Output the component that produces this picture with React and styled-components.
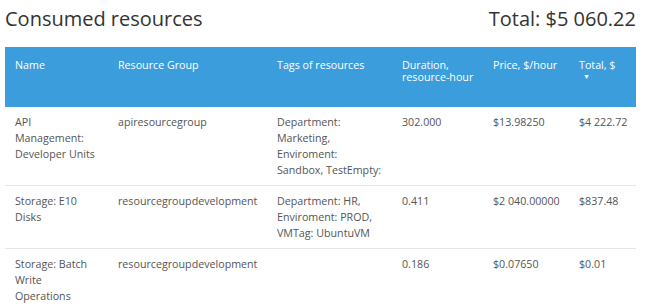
import React from 'react'
import styled, { createGlobalStyle } from 'styled-components'

const Global = createGlobalStyle`
  body {
    margin: 0;
    background: #fff;
    font-family: "Open Sans", "Noto Sans", sans-serif;
  }
`

const Page = styled.div`
  padding: 0 9px 0 5px;
  width: 631px;
`

const TitleBar = styled.div`
  display: flex;
  justify-content: space-between;
  align-items: center;
  height: 37px;
  margin-bottom: 10px;
  font-size: 20px;
  color: #333;
`

const Title = styled.h1`
  margin: 0;
  font-size: 20px;
  font-weight: 400;
`

const Total = styled.div``

const Table = styled.table`
  width: 631px;
  border-collapse: collapse;
  table-layout: fixed;
  font-size: 10.7px;
`

const Head = styled.th`
  background: #3c9ddd;
  color: #fff;
  font-weight: 400;
  text-align: left;
  vertical-align: top;
  line-height: 12px;
  padding: 12px 8px 0 10px;
  height: 48px;
  width: ${p => p.$w - 18}px;
`

const Arrow = styled.span`
  display: block;
  font-size: 7px;
  line-height: 12px;
  margin-left: 4px;
`

const Row = styled.tr`
  border-bottom: 1px solid #e6e6e6;
  &:last-child { border-bottom: none; }
`

const Cell = styled.td`
  color: #555;
  vertical-align: top;
  line-height: 16px;
  padding: 7px 8px 7px 10px;
`

const cols = [
  { title: 'Name', w: 103 },
  { title: 'Resource Group', w: 159 },
  { title: 'Tags of resources', w: 125 },
  { title: 'Duration, resource-hour', w: 91 },
  { title: 'Price, $/hour', w: 86 },
  { title: 'Total, $', w: 67, sort: true },
]

const rows = [
  ['API Management: Developer Units', 'apiresourcegroup', 'Department: Marketing, Enviroment: Sandbox, TestEmpty:', '302.000', '$13.98250', '$4\u00a0222.72'],
  ['Storage: E10 Disks', 'resourcegroupdevelopment', 'Department: HR, Enviroment: PROD, VMTag: UbuntuVM', '0.411', '$2\u00a0040.00000', '$837.48'],
  ['Storage: Batch Write Operations', 'resourcegroupdevelopment', '', '0.186', '$0.07650', '$0.01'],
]

export default function App() {
  return (
    <>
      <Global />
      <Page>
        <TitleBar>
          <Title>Consumed resources</Title>
          <Total>Total: $5&nbsp;060.22</Total>
        </TitleBar>
        <Table>
          <thead>
            <tr>
              {cols.map(c => (
                <Head key={c.title} $w={c.w}>
                  {c.title}
                  {c.sort && <Arrow>▼</Arrow>}
                </Head>
              ))}
            </tr>
          </thead>
          <tbody>
            {rows.map((r, i) => (
              <Row key={i}>
                {r.map((v, j) => <Cell key={j}>{v}</Cell>)}
              </Row>
            ))}
          </tbody>
        </Table>
      </Page>
    </>
  )
}
